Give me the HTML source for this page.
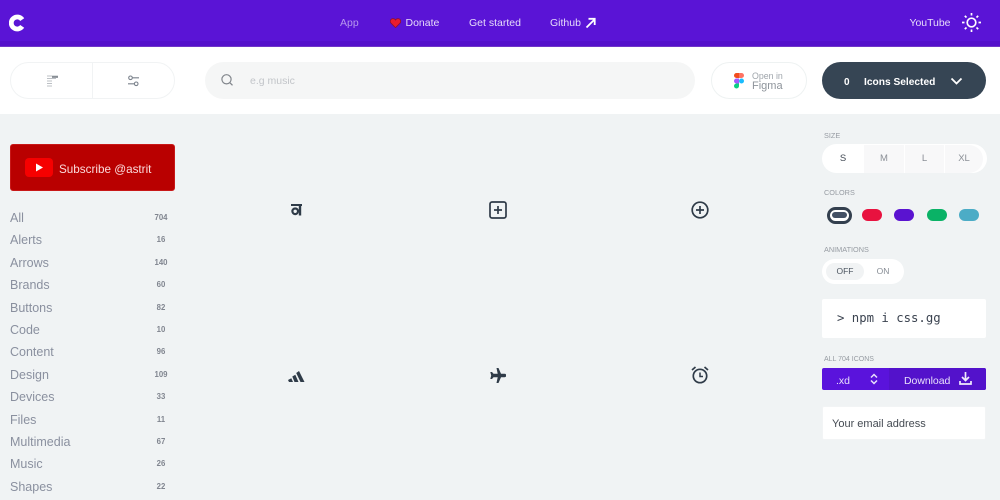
<!DOCTYPE html>
<html lang="en">
<head>
<meta charset="utf-8">
<title>css.gg</title>
<style>
*{box-sizing:border-box;margin:0;padding:0}
html,body{width:1000px;height:500px;overflow:hidden;background:#f0f3f4;font-family:"Liberation Sans",sans-serif}
.a{position:absolute;white-space:nowrap}
#page{position:relative;width:1000px;height:500px;overflow:hidden}
.nav{color:#e6dcfa;font-size:10.5px;top:16px;line-height:14px}
.cat{left:10px;color:#8a909f;font-size:12.5px;line-height:16px}
.cnt{color:#80858f;font-size:7.8px;font-weight:bold;line-height:10px;width:30px;text-align:center;left:146px;margin-top:1px}
.lab{left:824px;color:#969ba2;font-size:7.3px;line-height:10px;margin-top:1px}
.sz{top:145px;height:28px;color:#8a8f96;font-size:9.5px;line-height:28px;text-align:center;background:#f8f8f9}
.dot{top:209px;width:20px;height:12px;border-radius:6px}
</style>
</head>
<body>
<div id="page">
<div class="a" style="left:0;top:0;width:1000px;height:47px;background:#5a14d6"></div>
<div class="a" style="left:0;top:41px;width:1000px;height:5px;background:#5410cb"></div>
<div class="a" style="left:0;top:46px;width:1000px;height:1px;background:#6f35c8"></div>
<div class="a" style="left:0;top:47px;width:1000px;height:67px;background:#fff"></div>

<svg class="a" style="left:9px;top:14px" width="16" height="18" viewBox="0 0 16 18"><path d="M13.2 5.600A6 6 0 1 0 13.200 12.400" fill="none" stroke="#fff" stroke-width="4.800"/></svg>

<div class="a nav" style="left:340px;color:#b697ee">App</div>
<svg class="a" style="left:390px;top:18px" width="11" height="10" viewBox="0 0 11 10"><path d="M5.5 9.6L1 5.2C-.4 3.5.3.8 2.7.6 4 .5 5 1.2 5.5 2 6 1.2 7 .5 8.3.6c2.4.2 3.1 2.9 1.7 4.6z" fill="#ea1c2d" stroke="#8d1030" stroke-width=".8"/></svg>
<div class="a nav" style="left:405.500px">Donate</div>
<div class="a nav" style="left:469px">Get started</div>
<div class="a nav" style="left:550px">Github</div>
<svg class="a" style="left:585px;top:17px" width="11" height="12" viewBox="0 0 11 12"><path d="M1.500 10.500L9.500 2.500M3.500 1.800H9.700V8" fill="none" stroke="#fff" stroke-width="1.800"/></svg>
<div class="a nav" style="left:909.500px;letter-spacing:-.05px">YouTube</div>
<svg class="a" style="left:961px;top:12px" width="21" height="21" viewBox="0 0 21 21" fill="none" stroke="#fff"><circle cx="10.500" cy="10.500" r="4.300" stroke-width="1.700"/><path d="M10.500 1V3.500M10.500 17.500V20M1 10.500H3.500M17.500 10.500H20M3.800 3.800L5.500 5.500M15.500 15.500L17.200 17.200M3.800 17.200L5.500 15.500M15.500 5.500L17.200 3.800" stroke-width="1.700"/></svg>

<div class="a" style="left:10px;top:62px;width:165px;height:37px;border:1px solid #f1f3f4;border-radius:19px;background:#fff"></div>
<div class="a" style="left:92px;top:63px;width:1px;height:35px;background:#f1f3f4"></div>
<svg class="a" style="left:46px;top:74px" width="14" height="13" viewBox="0 0 14 13"><path d="M1 2H12M1 4.500H10M1 7H6M1 9.500H6M1 12H6" stroke="#bcc0c5" stroke-width="1"/><path d="M6 3H12" stroke="#777d85" stroke-width="1.500"/></svg>
<svg class="a" style="left:127px;top:75px" width="13" height="12" viewBox="0 0 13 12" fill="none" stroke="#7b828c" stroke-width="1.100"><circle cx="3.500" cy="2.800" r="1.800"/><circle cx="9.200" cy="8.800" r="1.800"/><path d="M5.500 2.800H12M1 8.800H7.200"/></svg>

<div class="a" style="left:205px;top:62px;width:490px;height:37px;border-radius:19px;background:#f5f6f6"></div>
<svg class="a" style="left:220px;top:73px" width="14" height="14" viewBox="0 0 14 14" fill="none" stroke="#80858b" stroke-width="1.200"><circle cx="6.500" cy="6.300" r="4.600"/><path d="M10 9.800L12.500 12.300"/></svg>
<div class="a" style="left:250px;top:74px;color:#c2c5c9;font-size:10.500px;line-height:14px">e.g music</div>

<div class="a" style="left:711px;top:62px;width:96px;height:37px;border:1px solid #eef2f2;border-radius:19px;background:#fff"></div>
<svg class="a" style="left:734px;top:73px" width="10" height="16" viewBox="0 0 10 16"><path d="M0 2.500A2.500 2.500 0 0 1 2.500 0H5V5H2.500A2.500 2.500 0 0 1 0 2.500z" fill="#f24e1e"/><path d="M5 0H7.500A2.500 2.500 0 0 1 7.500 5H5z" fill="#ff7262"/><path d="M0 8A2.500 2.500 0 0 1 2.500 5.500H5V10.500H2.500A2.500 2.500 0 0 1 0 8z" fill="#a259ff"/><circle cx="7.500" cy="8" r="2.500" fill="#1abcfe"/><path d="M0 13A2.500 2.500 0 0 1 2.500 10.500H5V13A2.500 2.500 0 0 1 0 13z" fill="#0acf83"/></svg>
<div class="a" style="left:752px;top:70.500px;color:#9fa5ab;font-size:8.800px;line-height:11px">Open in</div>
<div class="a" style="left:752px;top:80px;color:#8e949b;font-size:11px;line-height:13px">Figma</div>

<div class="a" style="left:822px;top:62px;width:164px;height:37px;border-radius:19px;background:#364554"></div>
<div class="a" style="left:844px;top:76px;color:#fff;font-size:10px;font-weight:bold;line-height:13px">0</div>
<div class="a" style="left:864px;top:76px;color:#fff;font-size:10.200px;font-weight:bold;line-height:13px">Icons Selected</div>
<svg class="a" style="left:950px;top:77px" width="13" height="9" viewBox="0 0 13 9"><path d="M1.500 1.500L6.500 6.500L11.500 1.500" fill="none" stroke="#fff" stroke-width="1.800"/></svg>

<div class="a" style="left:10px;top:144px;width:165px;height:47px;border-radius:3px;background:#b90000;border:1px solid #c81818"></div>
<div class="a" style="left:25px;top:158px;width:28px;height:19px;border-radius:4px;background:#f60000"></div>
<svg class="a" style="left:35px;top:163px" width="9" height="9" viewBox="0 0 9 9"><path d="M1 0.500L8 4.500L1 8.500z" fill="#fff"/></svg>
<div class="a" style="left:59px;top:162px;color:#fbdada;font-size:11.700px;line-height:15px">Subscribe @astrit</div>

<div class="a cat" style="top:210px">All</div><div class="a cnt" style="top:212px">704</div>
<div class="a cat" style="top:232px">Alerts</div><div class="a cnt" style="top:234px">16</div>
<div class="a cat" style="top:255px">Arrows</div><div class="a cnt" style="top:257px">140</div>
<div class="a cat" style="top:277px">Brands</div><div class="a cnt" style="top:279px">60</div>
<div class="a cat" style="top:300px">Buttons</div><div class="a cnt" style="top:302px">82</div>
<div class="a cat" style="top:322px">Code</div><div class="a cnt" style="top:324px">10</div>
<div class="a cat" style="top:344px">Content</div><div class="a cnt" style="top:346px">96</div>
<div class="a cat" style="top:367px">Design</div><div class="a cnt" style="top:369px">109</div>
<div class="a cat" style="top:389px">Devices</div><div class="a cnt" style="top:391px">33</div>
<div class="a cat" style="top:412px">Files</div><div class="a cnt" style="top:414px">11</div>
<div class="a cat" style="top:434px">Multimedia</div><div class="a cnt" style="top:436px">67</div>
<div class="a cat" style="top:456px">Music</div><div class="a cnt" style="top:458px">26</div>
<div class="a cat" style="top:479px">Shapes</div><div class="a cnt" style="top:481px">22</div>

<svg class="a" style="left:290px;top:204px" width="13" height="12" viewBox="0 0 13 12" fill="none" stroke="#2f3b48"><path d="M1 1H12" stroke-width="2"/><circle cx="5.200" cy="7.300" r="2.800" stroke-width="2.200"/><path d="M10 0V11.500" stroke-width="2.400"/></svg>
<svg class="a" style="left:489px;top:201px" width="18" height="18" viewBox="0 0 18 18" fill="none" stroke="#2f3b48" stroke-width="1.700"><rect x="1" y="1" width="16" height="16" rx="2"/><path d="M9 5V13M5 9H13"/></svg>
<svg class="a" style="left:691px;top:201px" width="18" height="18" viewBox="0 0 18 18" fill="none" stroke="#2f3b48" stroke-width="1.700"><circle cx="9" cy="9" r="7.800"/><path d="M9 5V13M5 9H13"/></svg>
<svg class="a" style="left:288px;top:370px" width="17" height="12" viewBox="0 0 17 12" fill="#2f3b48"><path d="M0 10L3.300 8.300L5 12H1zM4.300 6.500L7.300 4.800L10.500 12H6.500zM8.200 3L11 1L16.500 12H12.500z"/></svg>
<svg class="a" style="left:490px;top:368px" width="16" height="15" viewBox="0 0 16 15" fill="#2f3b48"><path d="M6.500 0H8.500L11 5.800H14.500A1.700 1.700 0 0 1 14.500 9.200H11L8.500 15H6.500L7.700 9.200H3.500L2 11H.3L1.200 7.500L.3 4H2L3.500 5.800H7.700z"/></svg>
<svg class="a" style="left:691px;top:366px" width="18" height="18" viewBox="0 0 18 18" fill="none" stroke="#2f3b48"><circle cx="9" cy="10" r="6.700" stroke-width="1.700"/><path d="M9 6.500V10.500H12" stroke-width="1.500"/><path d="M1 4L4.500 1M17 4L13.500 1" stroke-width="1.700"/></svg>

<div class="a lab" style="top:130px">SIZE</div>
<div class="a" style="left:822px;top:144px;width:165px;height:29px;border-radius:15px;background:#fff"></div>
<div class="a sz" style="left:864px;width:40px">M</div>
<div class="a sz" style="left:905px;width:39px">L</div>
<div class="a sz" style="left:945px;width:38px;border-radius:0 14px 14px 0">XL</div>
<div class="a" style="left:823px;top:145px;width:40px;height:28px;color:#3f4752;font-size:9.500px;line-height:28px;text-align:center">S</div>

<div class="a lab" style="top:187px">COLORS</div>
<div class="a" style="left:827px;top:207px;width:25px;height:17px;border:3px solid #333f4e;border-radius:9px;background:#fff"></div>
<div class="a" style="left:832px;top:212px;width:15px;height:6px;border-radius:3px;background:#435064"></div>
<div class="a dot" style="left:862px;background:#e8123f"></div>
<div class="a dot" style="left:894px;background:#5a13d0"></div>
<div class="a dot" style="left:927px;background:#0ab266"></div>
<div class="a dot" style="left:959px;background:#4cacc6"></div>

<div class="a lab" style="top:244px">ANIMATIONS</div>
<div class="a" style="left:822px;top:259px;width:82px;height:25px;border-radius:13px;background:#fff"></div>
<div class="a" style="left:826px;top:263px;width:38px;height:17px;border-radius:9px;background:#f1f3f4"></div>
<div class="a" style="left:826px;top:263px;width:38px;color:#4c5560;font-size:8.500px;line-height:17px;text-align:center">OFF</div>
<div class="a" style="left:864px;top:263px;width:38px;color:#878d95;font-size:8.500px;line-height:17px;text-align:center">ON</div>

<div class="a" style="left:822px;top:299px;width:164px;height:39px;border-radius:2px;background:#fff"></div>
<div class="a" style="left:837px;top:311px;color:#3b4350;font:12.300px/15px 'DejaVu Sans Mono',monospace">&gt; npm i css.gg</div>

<div class="a lab" style="top:354px;font-size:7px">ALL 704 ICONS</div>
<div class="a" style="left:822px;top:368px;width:164px;height:22px;border-radius:2px;background:#5a13dc"></div>
<div class="a" style="left:889px;top:368px;width:97px;height:22px;border-radius:0 2px 2px 0;background:#5312cb"></div>
<div class="a" style="left:836px;top:374px;color:#e8e0fb;font-size:10.500px;line-height:14px">.xd</div>
<svg class="a" style="left:870px;top:373px" width="8" height="12" viewBox="0 0 8 12"><path d="M1 4.500L4 1.500L7 4.500M1 7.500L4 10.500L7 7.500" fill="none" stroke="#e8e0fb" stroke-width="1.500"/></svg>
<div class="a" style="left:904px;top:374px;color:#e8e0fb;font-size:10.500px;line-height:14px;letter-spacing:-.05px">Download</div>
<svg class="a" style="left:959px;top:372px" width="13" height="13" viewBox="0 0 13 13"><path d="M6.500 0V8M3 5L6.500 8.500L10 5M1 9V12H12V9" fill="none" stroke="#f0eafc" stroke-width="1.700"/></svg>

<div class="a" style="left:822px;top:406px;width:164px;height:34px;border-radius:2px;background:#fff;border:1px solid #f2f4f5"></div>
<div class="a" style="left:832px;top:417px;color:#444a52;font-size:11px;line-height:14px">Your email address</div>
</div>
</body>
</html>
